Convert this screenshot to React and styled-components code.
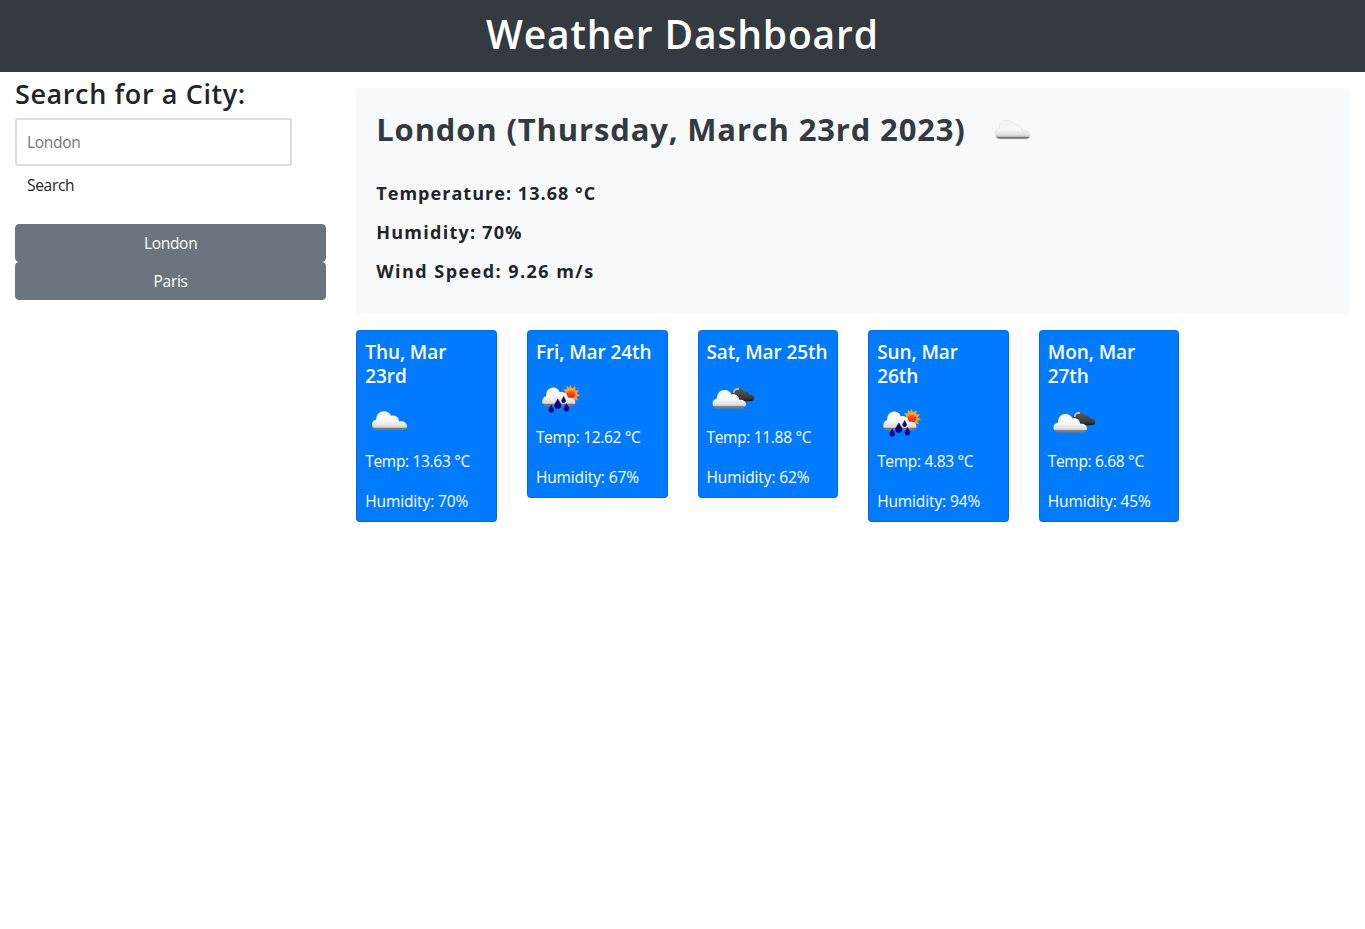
import React from "react";
import styled, { createGlobalStyle } from "styled-components";

const GlobalStyle = createGlobalStyle`
  *, *::before, *::after { box-sizing: border-box; }
  body {
    margin: 0;
    background: #fff;
    color: #212529;
    font-family: "Segoe UI", "Open Sans", "Noto Sans", sans-serif;
    font-size: 15.5px;
    line-height: 24px;
    letter-spacing: -0.3px;
  }
  h1, h2, h3, h4, p { margin: 0; }
`;

const Header = styled.header`
  height: 72px;
  padding-top: 10px;
  background: #343a40;
  text-align: center;
`;

const Title = styled.h1`
  color: #fff;
  font-size: 39px;
  font-weight: 600;
  line-height: 48px;
  letter-spacing: 0.85px;
`;

const Layout = styled.div`
  display: flex;
`;

const Sidebar = styled.aside`
  width: 25%;
  padding: 5px 15px 0;
`;

const SidebarTitle = styled.h2`
  font-size: 27px;
  font-weight: 600;
  line-height: 34px;
  letter-spacing: 0.6px;
  white-space: nowrap;
`;

const SearchInput = styled.input`
  display: block;
  width: 277px;
  height: 48px;
  margin-top: 7px;
  padding: 0 10px;
  border: 2px solid #ddd;
  border-radius: 3px;
  font: inherit;
  letter-spacing: inherit;
  &::placeholder { color: #757575; opacity: 1; }
`;

const SearchButton = styled.button`
  display: block;
  height: 38px;
  padding: 0 12px;
  border: 0;
  background: transparent;
  color: #212529;
  font: inherit;
  letter-spacing: inherit;
`;

const History = styled.div`
  display: flex;
  flex-direction: column;
  margin-top: 20px;
`;

const HistoryButton = styled.button`
  height: 38px;
  border: 1px solid #6c757d;
  border-radius: 4px;
  background: #6c757d;
  color: #fff;
  font: inherit;
  letter-spacing: inherit;
`;

const Main = styled.main`
  width: 75%;
  padding: 16px 15px 0;
`;

const Current = styled.section`
  height: 226px;
  padding: 16px 20px 0;
  border-radius: 4px;
  background: #f8f9fa;
`;

const CurrentHeading = styled.div`
  display: flex;
  align-items: center;
  height: 50px;
  gap: 22px;
`;

const CityName = styled.h3`
  color: #343a40;
  font-size: 31px;
  font-weight: 700;
  line-height: 38px;
  letter-spacing: 0.84px;
  white-space: nowrap;
`;

const Readings = styled.div`
  display: grid;
  gap: 15px;
  margin-top: 27px;
`;

const Reading = styled.p`
  font-size: 18px;
  font-weight: 700;
  letter-spacing: ${(p) => p.$tracking}px;
`;

const Forecast = styled.section`
  display: flex;
  align-items: flex-start;
  gap: 30px;
  margin-top: 16px;
`;

const Card = styled.article`
  width: 140.63px;
  padding: 8px;
  border: 1px solid rgba(0, 0, 0, 0.125);
  border-radius: 4px;
  background: #007bff;
  color: #fff;
`;

const CardTitle = styled.h4`
  padding-top: 1px;
  margin-bottom: 7px;
  font-size: 19px;
  font-weight: 600;
  line-height: 24px;
  letter-spacing: -0.08px;
`;

const CardText = styled.p`
  white-space: nowrap;
  letter-spacing: ${(p) => (p.$loose ? "-0.12px" : "-0.32px")};
  & + & { margin-top: 16px; }
`;

const Icon = styled.svg`
  display: block;
  flex: none;
  width: 50px;
  height: 50px;
  margin-bottom: ${(p) => (p.$card ? "4px" : "0")};
`;

const CLOUD =
  "M13 35C9.5 35 7 32.8 7 29.5C7 26.8 8.7 25 11.3 24.6C11 19.7 14.5 16.2 19 16.2C22.4 16.2 25 18 26.2 20.8C30.3 19.9 33.8 22.3 34.1 26.5C38.5 25.6 42 27.9 42 31.2C42 33.5 40.5 35 38 35Z";

function WeatherIcon({ kind, id, card }) {
  const fill = `url(#${id}-cloud)`;
  return (
    <Icon viewBox="0 0 50 50" $card={card} aria-hidden="true">
      <defs>
        <linearGradient id={`${id}-cloud`} x1="0" y1="0" x2="0" y2="1">
          <stop offset="0" stopColor={card ? "#fff" : "#f3f3f3"} />
          <stop offset="0.5" stopColor="#f8f8f8" />
          <stop offset="0.8" stopColor="#dedede" />
          <stop offset="0.87" stopColor="#bcbcbc" />
          <stop offset="0.9" stopColor="#737373" />
          <stop offset="1" stopColor="#7d7d7d" />
        </linearGradient>
        <linearGradient id={`${id}-dark`} x1="0" y1="0" x2="0" y2="1">
          <stop offset="0" stopColor="#5b5b5b" />
          <stop offset="0.75" stopColor="#3b3b3b" />
          <stop offset="1" stopColor="#151515" />
        </linearGradient>
        <linearGradient id={`${id}-sun`} x1="0" y1="0" x2="0" y2="1">
          <stop offset="0" stopColor="#ffb13a" />
          <stop offset="0.4" stopColor="#ff4b18" />
          <stop offset="1" stopColor="#f21905" />
        </linearGradient>
      </defs>
      {kind === "cloud" && (
        <path d={CLOUD} fill={fill} stroke={card ? "none" : "#d4d4d4"} strokeWidth="0.4" />
      )}
      {kind === "broken" && (
        <>
          <path
            d="M25 22C25.5 18.8 28.3 16.8 31.6 17C34.5 17.1 36.1 18.8 36.7 20.7C39.6 19.7 42 21.3 42.3 23.8C45.4 23.4 47.2 24.9 47.2 27C47.2 29 45.8 30.2 43.5 30.2H34Z"
            fill={`url(#${id}-dark)`}
          />
          <path d="M26.6 21.8C27 18.6 29.2 17.4 32 18.1" fill="none" stroke="#c4c4c4" strokeWidth="1.6" />
          <path
            d="M11 37.5C7.7 37.5 5.5 35.5 5.5 32.5C5.5 29.8 7.2 27.9 9.9 27.4C9.9 22.3 13.2 19 17.5 19C20.8 19 23.2 20.7 24.5 23.5C28.4 22.3 32 24.7 32.3 28.8C36.2 28.3 39 30.5 39 33.6C39 36 37.4 37.5 35 37.5Z"
            fill={fill}
          />
        </>
      )}
      {kind === "rain" && (
        <g transform="translate(0 0.4)">
          <path
            d="M34.3 13.2L36 17L39.6 14.9L39.3 18.9L43.2 19.2L40.7 21.9L44 24.4L40.2 25.3L42.2 29.2L38.2 28.2L34 29L28.5 22L29.3 20.6L27 17.6L30.6 18L30.7 14.2L33 16.6Z"
            fill="#ffa01e"
          />
          <circle cx="34.9" cy="22.5" r="4.9" fill={`url(#${id}-sun)`} stroke="#ffb84a" strokeWidth="0.7" />
          <path
            d="M11 34.8C8 34.8 6.2 32.5 6.2 30C6.2 27.2 7.8 25.4 10.2 24.9C9.7 19.7 13 16.2 17.1 16.2C20.2 16.2 22.7 17.8 23.7 20.8C28 19.8 31.6 22.4 31.8 26.5C36.5 25.6 39.4 27.5 39.4 31C39.4 33.3 38 34.8 35.5 34.8Z"
            fill={fill}
          />
          <g fill="#00009a" stroke="#08084c" strokeWidth="0.6">
            <path d="M21.8 27.5C23 30.2 25 31.8 25 34A3.2 3.2 0 0 1 18.6 34C18.6 31.8 20.7 30.2 21.8 27.5Z" />
            <path d="M27.7 25C28.4 27 29.5 28 29.5 29.4A1.9 1.9 0 0 1 25.7 29.4C25.7 28 27 27 27.7 25Z" />
            <path d="M15.3 33.8C16.2 36 17.7 37.2 17.7 39A2.5 2.5 0 0 1 12.8 39C12.8 37.2 14.3 36 15.3 33.8Z" />
            <path d="M30.4 32.2C31.4 34.6 32.8 35.7 32.8 37.5A2.4 2.4 0 0 1 28 37.5C28 35.7 29.5 34.6 30.4 32.2Z" />
          </g>
        </g>
      )}
    </Icon>
  );
}

const READINGS = [
  { text: "Temperature: 13.68 °C", tracking: 1.04 },
  { text: "Humidity: 70%", tracking: 1.25 },
  { text: "Wind Speed: 9.26 m/s", tracking: 1.45 },
];

const DAYS = [
  { date: "Thu, Mar 23rd", icon: "cloud", temp: "13.63", humidity: 70 },
  { date: "Fri, Mar 24th", icon: "rain", temp: "12.62", humidity: 67 },
  { date: "Sat, Mar 25th", icon: "broken", temp: "11.88", humidity: 62 },
  { date: "Sun, Mar 26th", icon: "rain", temp: "4.83", humidity: 94 },
  { date: "Mon, Mar 27th", icon: "broken", temp: "6.68", humidity: 45 },
];

export default function App() {
  return (
    <>
      <GlobalStyle />
      <Header>
        <Title>Weather Dashboard</Title>
      </Header>
      <Layout>
        <Sidebar>
          <SidebarTitle>Search for a City:</SidebarTitle>
          <SearchInput placeholder="London" />
          <SearchButton>Search</SearchButton>
          <History>
            <HistoryButton>London</HistoryButton>
            <HistoryButton>Paris</HistoryButton>
          </History>
        </Sidebar>
        <Main>
          <Current>
            <CurrentHeading>
              <CityName>London (Thursday, March 23rd 2023)</CityName>
              <WeatherIcon kind="cloud" id="current" />
            </CurrentHeading>
            <Readings>
              {READINGS.map((r) => (
                <Reading key={r.text} $tracking={r.tracking}>{r.text}</Reading>
              ))}
            </Readings>
          </Current>
          <Forecast>
            {DAYS.map((day, i) => (
              <Card key={day.date}>
                <CardTitle>{day.date}</CardTitle>
                <WeatherIcon kind={day.icon} id={`day${i}`} card />
                <CardText>Temp: {day.temp} °C</CardText>
                <CardText $loose>Humidity: {day.humidity}%</CardText>
              </Card>
            ))}
          </Forecast>
        </Main>
      </Layout>
    </>
  );
}
